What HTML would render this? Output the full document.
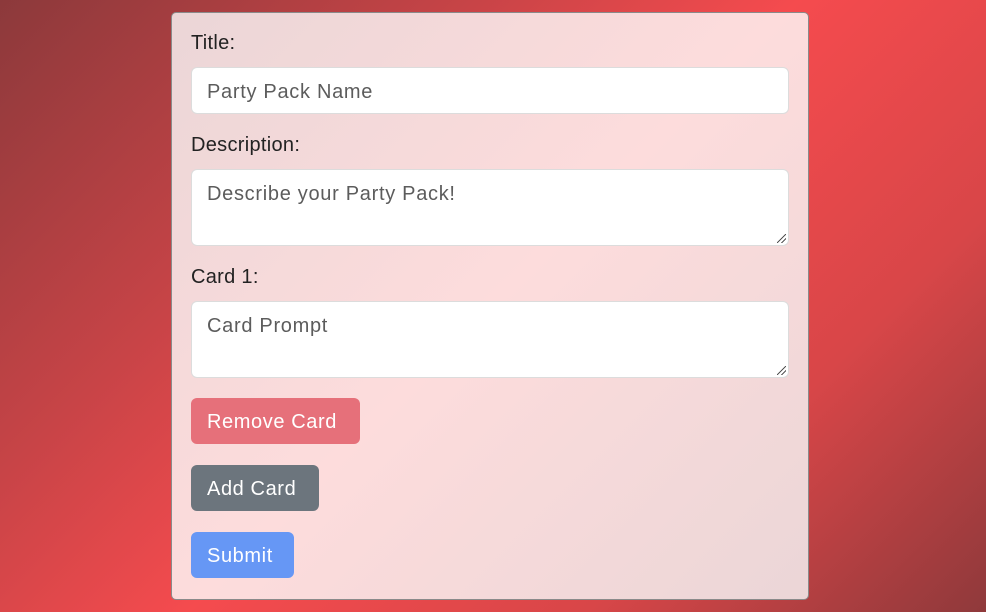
<!DOCTYPE html>
<html><head><style>
html,body{margin:0;padding:0;width:986px;height:612px;overflow:hidden}
body{background:linear-gradient(135deg,#8c393b 0%,#c84447 30%,#f54b4e 50%,#d84648 75%,#8f393b 100%);font-family:"Liberation Sans",sans-serif;position:relative}
.card{position:absolute;left:171px;top:12px;width:636px;height:586px;border:1px solid #8a8a8a;border-radius:5px;background:linear-gradient(135deg,#ebd6d7 0%,#fddcdc 50%,#ebd6d7 100%)}
.lbl{position:absolute;left:191px;font-size:20px;color:#222;letter-spacing:0.3px}
.in{position:absolute;left:191px;width:598px;background:#fff;border:1px solid #dcdcdc;border-radius:6px;box-sizing:border-box;padding:0 15px;font-size:20px;color:#5c5c5c;letter-spacing:0.7px}
.btn{position:absolute;left:191px;height:46px;border-radius:6px;color:#fff;font-size:20px;line-height:48px;padding:0 16px;box-sizing:border-box;letter-spacing:0.6px;white-space:nowrap}
.rs{position:absolute;right:2px;bottom:2px;width:9px;height:9px;background:linear-gradient(135deg,transparent 45%,#555 45%,#555 55%,transparent 55%,transparent 70%,#555 70%,#555 80%,transparent 80%)}
</style></head><body>
<div class="card"></div>
<div class="lbl" style="top:32px">Title:</div>
<div class="in" style="top:67px;height:47px;line-height:48px">Party Pack Name</div>
<div class="lbl" style="top:134px">Description:</div>
<div class="in" style="top:169px;height:77px;padding-top:13px">Describe your Party Pack!<div class="rs"></div></div>
<div class="lbl" style="top:266px">Card 1:</div>
<div class="in" style="top:301px;height:77px;padding-top:13px">Card Prompt<div class="rs"></div></div>
<div class="btn" style="top:398px;width:169px;background:#e6707a">Remove Card</div>
<div class="btn" style="top:465px;width:128px;background:#6c757d">Add Card</div>
<div class="btn" style="top:532px;width:103px;background:#6697f5">Submit</div>
</body></html>
